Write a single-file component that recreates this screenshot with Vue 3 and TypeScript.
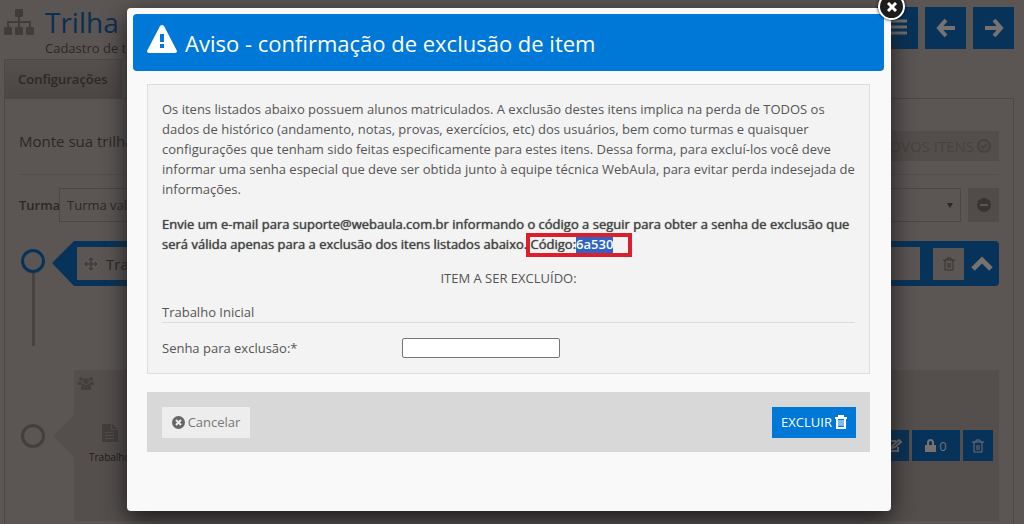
<script setup lang="ts">
import { ref } from 'vue'

const password = ref('')
const group = ref('Turma validação')
const code = '6a530'
const items = ['Trabalho Inicial']
</script>

<template>
  <main class="page">
    <header class="top">
      <svg class="sitemap" viewBox="0 0 30 26" aria-hidden="true">
        <rect x="11" width="8" height="8" rx="1" />
        <rect y="18" width="8" height="8" rx="1" />
        <rect x="11" y="18" width="8" height="8" rx="1" />
        <rect x="22" y="18" width="8" height="8" rx="1" />
        <path d="M15 8v10M4 18v-5h22v5" />
      </svg>
      <div class="titles">
        <h1>Trilha de</h1>
        <p>Cadastro de trilhas</p>
      </div>
      <nav class="tools">
        <button type="button" aria-label="Lista">
          <svg viewBox="0 0 20 20"><path d="M1 3h18M1 9h18M1 15h18" stroke-width="3" /></svg>
        </button>
        <button type="button" aria-label="Voltar">
          <svg viewBox="0 0 20 20"><path d="M10 2L3 10l7 8M3 10h16" stroke-width="4" /></svg>
        </button>
        <button type="button" aria-label="Avançar">
          <svg viewBox="0 0 20 20"><path d="M10 2l7 8-7 8M17 10H1" stroke-width="4" /></svg>
        </button>
      </nav>
    </header>

    <div class="tabs"><button type="button">Configurações</button></div>

    <section class="panel">
      <div class="intro">
        <p>Monte sua trilha</p>
        <button type="button" class="new">
          NOVOS ITENS
          <svg viewBox="0 0 14 14" aria-hidden="true"><circle cx="7" cy="7" r="6" /><path d="M4 7l2 2 4-4" /></svg>
        </button>
      </div>
      <div class="group">
        <label for="turma">Turma</label>
        <div class="pick">
          <select id="turma" v-model="group"><option>Turma validação</option></select>
        </div>
        <button type="button" class="minus" aria-label="Remover turma">
          <svg viewBox="0 0 14 14"><circle cx="7" cy="7" r="6" /><path d="M3 7h8" /></svg>
        </button>
      </div>

      <div class="step">
        <div class="rail"><span class="dot blue"></span><span class="line"></span></div>
        <div class="bar">
          <svg class="tip" viewBox="0 0 25 45" preserveAspectRatio="none" aria-hidden="true"><path d="M0 22L22 0h3v45h-3z" /></svg>
          <div class="barbody">
            <div class="name">
              <svg viewBox="0 0 14 14" aria-hidden="true"><path d="M7 1v12M1 7h12M5 3l2-2 2 2M5 11l2 2 2-2M3 5L1 7l2 2M11 5l2 2-2 2" /></svg>
              <span>Trabalho</span>
            </div>
            <button type="button" class="del" aria-label="Excluir">
              <svg viewBox="0 0 12 14"><path d="M0 3h12M4 3V1h4v2M2 3v10h8V3M5 6v5M7 6v5" /></svg>
            </button>
            <button type="button" class="fold" aria-label="Recolher">
              <svg viewBox="0 0 22 16"><path d="M2 13l9-9 9 9" /></svg>
            </button>
          </div>
        </div>
      </div>

      <div class="step second">
        <div class="rail"><span class="dot"></span></div>
        <div class="card">
          <svg class="people" viewBox="0 0 16 14" aria-hidden="true">
            <circle cx="3" cy="3" r="2" /><circle cx="13" cy="3" r="2" /><circle cx="8" cy="5" r="3" />
            <path d="M0 6h4l1 3H0zM12 6h4v3h-5zM3 14v-3q0-3 3-3 2 2 4 0 3 0 3 3v3z" />
          </svg>
          <div class="task">
            <svg viewBox="0 0 16 18" aria-hidden="true"><path fill-rule="evenodd" d="M0 0h9v6h7v12H0zM10 0l6 5h-6zM3 8v1h9V8zM3 11v1h9v-1zM3 14v1h9v-1z" /></svg>
            <span>Trabalho</span>
          </div>
          <div class="actions">
            <button type="button" class="edit" aria-label="Editar">
              <svg viewBox="0 0 16 14"><path d="M12 8v4H2V2h8M6 9l1-3 6-5 2 2-6 5z" /></svg>
            </button>
            <button type="button" class="lock">
              <svg viewBox="0 0 11 13" aria-hidden="true"><path class="fill" d="M0 6h11v7H0z" /><path d="M3 6V4q0-3 2.500-3T8 4v2" /></svg>
              0
            </button>
            <button type="button" class="trash" aria-label="Excluir">
              <svg viewBox="0 0 12 14"><path d="M0 3h12M4 3V1h4v2M2 3v10h8V3M5 6v5M7 6v5" /></svg>
            </button>
          </div>
        </div>
      </div>
    </section>

    <div class="backdrop">
      <section class="modal" role="dialog" aria-modal="true" aria-labelledby="aviso">
        <button type="button" class="close" aria-label="Fechar">
          <svg viewBox="0 0 10 10"><path d="M1 1l8 8M9 1L1 9" /></svg>
        </button>
        <header class="head">
          <svg viewBox="0 0 30 28" aria-hidden="true">
            <path fill-rule="evenodd" d="M13 1q2-2 4 0l13 25q0 2-2 2H2q-2 0-2-2zM13 9v8h4V9zM13 19v4h4v-4z" />
          </svg>
          <h2 id="aviso">Aviso - confirmação de exclusão de item</h2>
        </header>
        <form class="content" @submit.prevent>
          <div class="box">
            <p>
              Os itens listados abaixo possuem alunos matriculados. A exclusão destes itens implica na perda de TODOS os
              dados de histórico (andamento, notas, provas, exercícios, etc) dos usuários, bem como turmas e quaisquer
              configurações que tenham sido feitas especificamente para estes itens. Dessa forma, para excluí-los você deve
              informar uma senha especial que deve ser obtida junto à equipe técnica WebAula, para evitar perda indesejada de
              informações.
            </p>
            <p class="strong">
              Envie um e-mail para suporte@webaula.com.br informando o código a seguir para obter a senha de exclusão que
              será válida apenas para a exclusão dos itens listados abaixo. <span class="code">Código:<mark>{{ code }}</mark></span>
            </p>
            <h3>ITEM A SER EXCLUÍDO:</h3>
            <ul>
              <li v-for="item in items" :key="item">{{ item }}</li>
            </ul>
            <div class="field">
              <label for="senha">Senha para exclusão:*</label>
              <input id="senha" v-model="password" type="password" />
            </div>
          </div>
          <footer>
            <button type="button" class="cancel">
              <svg viewBox="0 0 13 13" aria-hidden="true"><circle cx="6.500" cy="6.500" r="6.500" /><path d="M4 4l5 5M9 4L4 9" /></svg>
              Cancelar
            </button>
            <button type="submit" class="remove">
              EXCLUIR
              <svg viewBox="0 0 12 14" aria-hidden="true"><path class="lid" d="M0 3h12M4 3V1h4v2M2 3v10h8V3" /><path d="M4 5v6M6 5v6M8 5v6" /></svg>
            </button>
          </footer>
        </form>
      </section>
    </div>
  </main>
</template>

<style>
body {
  background: #5b5654;
}
</style>

<style scoped>
* {
  box-sizing: border-box;
}
.page {
  position: relative;
  height: 100vh;
  min-height: 520px;
  overflow: hidden;
  background: #5b5654;
  color: #2b2827;
  font: 13px/20px "Open Sans", sans-serif;
}
h1, h2, h3, p, ul {
  margin: 0;
  padding: 0;
  font-weight: 400;
  list-style: none;
}
button {
  padding: 0;
  border: 0;
  font: inherit;
  color: inherit;
}
svg {
  display: block;
  flex: none;
}
.top {
  display: flex;
  height: 59px;
  padding: 7px 10px 0 4px;
}
.sitemap {
  width: 30px;
  height: 26px;
  margin: 2px 11px 0 0;
  fill: #403c3b;
}
.sitemap path {
  fill: none;
  stroke: #403c3b;
  stroke-width: 2;
}
.titles {
  flex: 1;
}
h1 {
  margin-top: -2px;
  font-size: 28px;
  line-height: 34px;
  color: #0b2f50;
}
.titles p {
  line-height: 18px;
}
.tools {
  display: flex;
  gap: 7px;
}
.tools button {
  display: grid;
  place-items: center;
  width: 41px;
  height: 42px;
  background: #07335a;
}
.tools svg {
  width: 20px;
  height: 20px;
  fill: none;
  stroke: #77716f;
}
.tabs {
  display: flex;
  margin-left: 4px;
}
.tabs button {
  height: 39px;
  padding: 0 13px;
  border: 1px solid #4c4745;
  border-bottom: 0;
  background: linear-gradient(#554f4e, #4b4644);
  font-weight: 600;
}
.panel {
  height: 500px;
  margin: 0 10px 0 4px;
  padding: 0 14px;
  border: 1px solid #4c4745;
}
.intro {
  display: flex;
  justify-content: space-between;
  height: 76px;
  padding-top: 32px;
  margin-bottom: 13px;
  border-bottom: 1px solid #544f4d;
  font-size: 15px;
}
.new {
  display: flex;
  align-items: center;
  gap: 3px;
  height: 30px;
  padding: 0 8px;
  background: #534e4c;
  color: #474241;
}
.new svg, .minus svg {
  width: 14px;
  height: 14px;
  fill: none;
  stroke: #474241;
  stroke-width: 2;
}
.group {
  display: flex;
  align-items: center;
  height: 34px;
  margin-bottom: 19px;
}
.group label {
  width: 40px;
  font-weight: 600;
}
.pick {
  position: relative;
  flex: 1;
}
.pick::after {
  content: "";
  position: absolute;
  top: 15px;
  right: 8px;
  border: 3px solid transparent;
  border-top: 5px solid #2b2827;
}
select {
  display: block;
  width: 100%;
  height: 34px;
  padding: 0 7px;
  border: 1px solid #4c4745;
  appearance: none;
  background: transparent;
  color: inherit;
  font: inherit;
}
.minus {
  display: grid;
  place-items: center;
  width: 31px;
  height: 34px;
  margin-left: 7px;
  background: #514c4a;
}
.minus svg {
  fill: #393534;
  stroke: #393534;
}
.minus path {
  stroke: #5b5654;
}
.step {
  display: grid;
  grid-template-columns: 33px 1fr;
}
.rail {
  display: flex;
  flex-direction: column;
  width: 28px;
  align-items: center;
  padding-top: 8px;
}
.dot {
  width: 24px;
  height: 24px;
  border: 3px solid #433f3d;
  border-radius: 50%;
}
.dot.blue {
  border-color: #07335a;
}
.line {
  width: 3px;
  height: 73px;
  background: #47423f;
}
.bar {
  display: flex;
  height: 45px;
}
.tip {
  width: 25px;
  height: 45px;
  fill: #07335a;
}
.barbody {
  display: flex;
  align-items: center;
  flex: 1;
  border-radius: 0 4px 4px 0;
  background: #07335a;
}
.name {
  display: flex;
  align-items: center;
  gap: 8px;
  flex: 1;
  height: 33px;
  padding-left: 7px;
  background: #5b5654;
  font-size: 15px;
}
.name svg {
  width: 14px;
  height: 14px;
  fill: none;
  stroke: #34302f;
  stroke-width: 1;
}
.del {
  display: grid;
  place-items: center;
  width: 31px;
  height: 32px;
  margin: 0 7px 0 13px;
  background: #5b5654;
}
.del svg, .trash svg {
  width: 12px;
  height: 14px;
  fill: none;
  stroke: #34302f;
}
.fold {
  width: 28px;
  background: none;
}
.fold svg {
  width: 22px;
  height: 16px;
  fill: none;
  stroke: #77716f;
  stroke-width: 5;
}
.second {
  margin-top: 24px;
}
.second .rail {
  justify-content: center;
  height: 132px;
  padding: 0;
}
.card {
  position: relative;
  display: flex;
  align-items: center;
  height: 151px;
  margin-left: 22px;
  padding: 0 6px 0 15px;
  background: #544f4d;
}
.card::before {
  content: "";
  position: absolute;
  top: 45px;
  left: -42px;
  border: 21px solid transparent;
  border-right-color: #544f4d;
}
.people {
  position: absolute;
  top: 6px;
  left: 4px;
  width: 16px;
  height: 14px;
  fill: #433f3d;
}
.task {
  display: flex;
  flex-direction: column;
  align-items: flex-start;
  flex: 1;
  font-size: 10px;
  line-height: 20px;
  color: #1d1a19;
}
.task svg {
  width: 16px;
  height: 18px;
  margin: 0 13px 5px;
  fill: #433f3d;
}
.actions {
  display: flex;
  gap: 3px;
}
.actions button {
  display: flex;
  justify-content: center;
  align-items: center;
  gap: 3px;
  height: 31px;
  background: #07335a;
  color: #77716f;
}
.actions svg {
  fill: none;
  stroke: #77716f;
  stroke-width: 2;
}
.edit {
  width: 31px;
}
.edit svg {
  width: 16px;
  height: 14px;
}
.lock {
  width: 48px;
}
.lock svg {
  width: 11px;
  height: 13px;
}
.lock .fill {
  fill: #77716f;
  stroke: none;
}
.trash {
  width: 30px;
}
.actions .trash svg {
  stroke-width: 1;
}
.backdrop {
  position: absolute;
  inset: 0;
  padding: 8px 133px 13px 127px;
}
.modal {
  position: relative;
  min-height: 100%;
  padding: 6px 7px 6px 6px;
  border-radius: 4px;
  background: #f9f9f9;
  box-shadow: 0 8px 24px #1c191c;
  color: #555;
}
.close {
  position: absolute;
  top: -15px;
  right: -14px;
  display: grid;
  place-items: center;
  width: 27px;
  height: 27px;
  border: 2px solid #fff;
  border-radius: 50%;
  background: #1c1c1c;
  box-shadow: 0 0 3px #000;
}
.close svg {
  width: 10px;
  height: 10px;
  stroke: #fff;
  stroke-width: 3;
}
.head {
  display: flex;
  align-items: center;
  gap: 8px;
  height: 57px;
  padding: 0 14px;
  border-radius: 4px;
  background: #0078d7;
  color: #fff;
}
.head svg {
  width: 30px;
  height: 28px;
  margin-bottom: 8px;
  fill: #fff;
}
h2 {
  font-size: 22px;
  line-height: 30px;
}
.content {
  padding: 13px 14px 0;
}
.box {
  padding: 14px 14px 15px;
  border: 1px solid #dedede;
  background: #f3f3f3;
}
.strong {
  margin: 15px 0 14px;
  color: #444;
  text-shadow: 0 0 1px #444;
}
.code {
  position: relative;
}
.code::after {
  content: "";
  position: absolute;
  inset: -2px -19px -4px -5px;
  border: 4px solid #da202c;
}
mark {
  background: #3163c5;
  color: #fff;
  font-weight: 600;
  text-shadow: none;
}
h3 {
  margin-bottom: 14px;
  font-size: 13px;
  text-align: center;
}
li {
  border-bottom: 1px solid #dcdcdc;
}
.field {
  display: flex;
  align-items: center;
  margin-top: 15px;
}
.field label {
  width: 240px;
}
input {
  width: 158px;
  height: 20px;
  border: 1px solid #767676;
  border-radius: 2px;
  background: #fff;
}
footer {
  display: flex;
  justify-content: space-between;
  align-items: center;
  height: 60px;
  margin-top: 18px;
  padding: 0 14px 0 15px;
  background: #d8d8d8;
}
footer button {
  display: flex;
  justify-content: center;
  align-items: center;
  height: 31px;
  gap: 3px;
}
.cancel {
  width: 88px;
  background: #ededed;
  color: #777;
}
.cancel svg {
  width: 13px;
  height: 13px;
  fill: #666;
  stroke: #ededed;
  stroke-width: 2;
}
.cancel circle {
  stroke: none;
}
.remove {
  width: 84px;
  background: #0078d7;
  color: #fff;
}
.remove svg {
  width: 12px;
  height: 14px;
  fill: none;
  stroke: #fff;
}
.remove .lid {
  stroke-width: 2;
}
</style>
